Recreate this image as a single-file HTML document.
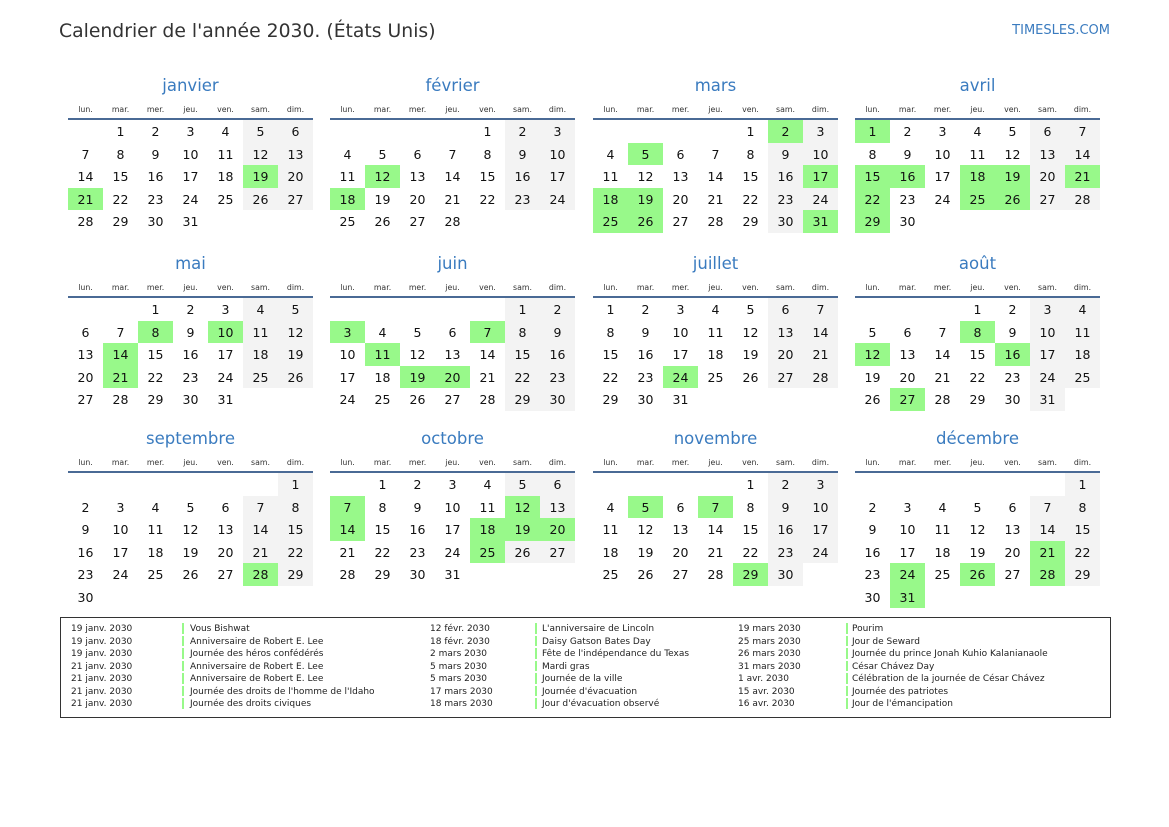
<!DOCTYPE html>
<html><head><meta charset="utf-8">
<style>
*{margin:0;padding:0;box-sizing:border-box}
body{width:1169px;height:827px;background:#fff;font-family:"DejaVu Sans","Liberation Sans",sans-serif;color:#111;position:relative;overflow:hidden}
.t{position:absolute;left:59px;top:21px;font-size:18.8px;color:#333;white-space:nowrap}
.s{position:absolute;right:59px;top:23px;font-size:13px;color:#3a7bbf}
.m{position:absolute;width:245px}
.m h2{height:24px;line-height:26px;text-align:center;font-weight:normal;font-size:16.5px;color:#3a7bbf}
.wd{display:grid;grid-template-columns:repeat(7,35px);height:23px;line-height:26px;font-size:7.8px;color:#333;text-align:center;border-bottom:2px solid #4a6a95}
.d{display:grid;grid-template-columns:repeat(7,35px);grid-auto-rows:22.5px}
.d b,.d i{font-weight:normal;font-style:normal;font-size:12.5px;text-align:center;line-height:23px}
.d b:nth-child(7n+6),.d b:nth-child(7n){background:#f3f3f3}
.d b.g{background:#98f98a}
.lg{position:absolute;left:60px;top:617px;width:1051px;height:101px;border:1.5px solid #333}
.c{position:absolute;top:5px;font-size:9px;line-height:12.5px;color:#222;white-space:nowrap}
.bar{position:absolute;top:5px;width:2px}
.bar div{height:10.5px;margin-bottom:2px;background:#98f98a}
</style></head><body>
<div class="t">Calendrier de l'année 2030. (États Unis)</div>
<div class="s">TIMESLES.COM</div>

<div class="m" style="left:68px;top:73px"><h2>janvier</h2><div class="wd"><span>lun.</span><span>mar.</span><span>mer.</span><span>jeu.</span><span>ven.</span><span>sam.</span><span>dim.</span></div><div class="d"><i></i><b>1</b><b>2</b><b>3</b><b>4</b><b>5</b><b>6</b><b>7</b><b>8</b><b>9</b><b>10</b><b>11</b><b>12</b><b>13</b><b>14</b><b>15</b><b>16</b><b>17</b><b>18</b><b class="g">19</b><b>20</b><b class="g">21</b><b>22</b><b>23</b><b>24</b><b>25</b><b>26</b><b>27</b><b>28</b><b>29</b><b>30</b><b>31</b></div></div>

<div class="m" style="left:330px;top:73px"><h2>février</h2><div class="wd"><span>lun.</span><span>mar.</span><span>mer.</span><span>jeu.</span><span>ven.</span><span>sam.</span><span>dim.</span></div><div class="d"><i></i><i></i><i></i><i></i><b>1</b><b>2</b><b>3</b><b>4</b><b>5</b><b>6</b><b>7</b><b>8</b><b>9</b><b>10</b><b>11</b><b class="g">12</b><b>13</b><b>14</b><b>15</b><b>16</b><b>17</b><b class="g">18</b><b>19</b><b>20</b><b>21</b><b>22</b><b>23</b><b>24</b><b>25</b><b>26</b><b>27</b><b>28</b></div></div>

<div class="m" style="left:593px;top:73px"><h2>mars</h2><div class="wd"><span>lun.</span><span>mar.</span><span>mer.</span><span>jeu.</span><span>ven.</span><span>sam.</span><span>dim.</span></div><div class="d"><i></i><i></i><i></i><i></i><b>1</b><b class="g">2</b><b>3</b><b>4</b><b class="g">5</b><b>6</b><b>7</b><b>8</b><b>9</b><b>10</b><b>11</b><b>12</b><b>13</b><b>14</b><b>15</b><b>16</b><b class="g">17</b><b class="g">18</b><b class="g">19</b><b>20</b><b>21</b><b>22</b><b>23</b><b>24</b><b class="g">25</b><b class="g">26</b><b>27</b><b>28</b><b>29</b><b>30</b><b class="g">31</b></div></div>

<div class="m" style="left:855px;top:73px"><h2>avril</h2><div class="wd"><span>lun.</span><span>mar.</span><span>mer.</span><span>jeu.</span><span>ven.</span><span>sam.</span><span>dim.</span></div><div class="d"><b class="g">1</b><b>2</b><b>3</b><b>4</b><b>5</b><b>6</b><b>7</b><b>8</b><b>9</b><b>10</b><b>11</b><b>12</b><b>13</b><b>14</b><b class="g">15</b><b class="g">16</b><b>17</b><b class="g">18</b><b class="g">19</b><b>20</b><b class="g">21</b><b class="g">22</b><b>23</b><b>24</b><b class="g">25</b><b class="g">26</b><b>27</b><b>28</b><b class="g">29</b><b>30</b></div></div>

<div class="m" style="left:68px;top:251px"><h2>mai</h2><div class="wd"><span>lun.</span><span>mar.</span><span>mer.</span><span>jeu.</span><span>ven.</span><span>sam.</span><span>dim.</span></div><div class="d"><i></i><i></i><b>1</b><b>2</b><b>3</b><b>4</b><b>5</b><b>6</b><b>7</b><b class="g">8</b><b>9</b><b class="g">10</b><b>11</b><b>12</b><b>13</b><b class="g">14</b><b>15</b><b>16</b><b>17</b><b>18</b><b>19</b><b>20</b><b class="g">21</b><b>22</b><b>23</b><b>24</b><b>25</b><b>26</b><b>27</b><b>28</b><b>29</b><b>30</b><b>31</b></div></div>

<div class="m" style="left:330px;top:251px"><h2>juin</h2><div class="wd"><span>lun.</span><span>mar.</span><span>mer.</span><span>jeu.</span><span>ven.</span><span>sam.</span><span>dim.</span></div><div class="d"><i></i><i></i><i></i><i></i><i></i><b>1</b><b>2</b><b class="g">3</b><b>4</b><b>5</b><b>6</b><b class="g">7</b><b>8</b><b>9</b><b>10</b><b class="g">11</b><b>12</b><b>13</b><b>14</b><b>15</b><b>16</b><b>17</b><b>18</b><b class="g">19</b><b class="g">20</b><b>21</b><b>22</b><b>23</b><b>24</b><b>25</b><b>26</b><b>27</b><b>28</b><b>29</b><b>30</b></div></div>

<div class="m" style="left:593px;top:251px"><h2>juillet</h2><div class="wd"><span>lun.</span><span>mar.</span><span>mer.</span><span>jeu.</span><span>ven.</span><span>sam.</span><span>dim.</span></div><div class="d"><b>1</b><b>2</b><b>3</b><b>4</b><b>5</b><b>6</b><b>7</b><b>8</b><b>9</b><b>10</b><b>11</b><b>12</b><b>13</b><b>14</b><b>15</b><b>16</b><b>17</b><b>18</b><b>19</b><b>20</b><b>21</b><b>22</b><b>23</b><b class="g">24</b><b>25</b><b>26</b><b>27</b><b>28</b><b>29</b><b>30</b><b>31</b></div></div>

<div class="m" style="left:855px;top:251px"><h2>août</h2><div class="wd"><span>lun.</span><span>mar.</span><span>mer.</span><span>jeu.</span><span>ven.</span><span>sam.</span><span>dim.</span></div><div class="d"><i></i><i></i><i></i><b>1</b><b>2</b><b>3</b><b>4</b><b>5</b><b>6</b><b>7</b><b class="g">8</b><b>9</b><b>10</b><b>11</b><b class="g">12</b><b>13</b><b>14</b><b>15</b><b class="g">16</b><b>17</b><b>18</b><b>19</b><b>20</b><b>21</b><b>22</b><b>23</b><b>24</b><b>25</b><b>26</b><b class="g">27</b><b>28</b><b>29</b><b>30</b><b>31</b></div></div>

<div class="m" style="left:68px;top:426px"><h2>septembre</h2><div class="wd"><span>lun.</span><span>mar.</span><span>mer.</span><span>jeu.</span><span>ven.</span><span>sam.</span><span>dim.</span></div><div class="d"><i></i><i></i><i></i><i></i><i></i><i></i><b>1</b><b>2</b><b>3</b><b>4</b><b>5</b><b>6</b><b>7</b><b>8</b><b>9</b><b>10</b><b>11</b><b>12</b><b>13</b><b>14</b><b>15</b><b>16</b><b>17</b><b>18</b><b>19</b><b>20</b><b>21</b><b>22</b><b>23</b><b>24</b><b>25</b><b>26</b><b>27</b><b class="g">28</b><b>29</b><b>30</b></div></div>

<div class="m" style="left:330px;top:426px"><h2>octobre</h2><div class="wd"><span>lun.</span><span>mar.</span><span>mer.</span><span>jeu.</span><span>ven.</span><span>sam.</span><span>dim.</span></div><div class="d"><i></i><b>1</b><b>2</b><b>3</b><b>4</b><b>5</b><b>6</b><b class="g">7</b><b>8</b><b>9</b><b>10</b><b>11</b><b class="g">12</b><b>13</b><b class="g">14</b><b>15</b><b>16</b><b>17</b><b class="g">18</b><b class="g">19</b><b class="g">20</b><b>21</b><b>22</b><b>23</b><b>24</b><b class="g">25</b><b>26</b><b>27</b><b>28</b><b>29</b><b>30</b><b>31</b></div></div>

<div class="m" style="left:593px;top:426px"><h2>novembre</h2><div class="wd"><span>lun.</span><span>mar.</span><span>mer.</span><span>jeu.</span><span>ven.</span><span>sam.</span><span>dim.</span></div><div class="d"><i></i><i></i><i></i><i></i><b>1</b><b>2</b><b>3</b><b>4</b><b class="g">5</b><b>6</b><b class="g">7</b><b>8</b><b>9</b><b>10</b><b>11</b><b>12</b><b>13</b><b>14</b><b>15</b><b>16</b><b>17</b><b>18</b><b>19</b><b>20</b><b>21</b><b>22</b><b>23</b><b>24</b><b>25</b><b>26</b><b>27</b><b>28</b><b class="g">29</b><b>30</b></div></div>

<div class="m" style="left:855px;top:426px"><h2>décembre</h2><div class="wd"><span>lun.</span><span>mar.</span><span>mer.</span><span>jeu.</span><span>ven.</span><span>sam.</span><span>dim.</span></div><div class="d"><i></i><i></i><i></i><i></i><i></i><i></i><b>1</b><b>2</b><b>3</b><b>4</b><b>5</b><b>6</b><b>7</b><b>8</b><b>9</b><b>10</b><b>11</b><b>12</b><b>13</b><b>14</b><b>15</b><b>16</b><b>17</b><b>18</b><b>19</b><b>20</b><b class="g">21</b><b>22</b><b>23</b><b class="g">24</b><b>25</b><b class="g">26</b><b>27</b><b class="g">28</b><b>29</b><b>30</b><b class="g">31</b></div></div>

<div class="lg">
<div class="c" style="left:10px">19 janv. 2030<br>19 janv. 2030<br>19 janv. 2030<br>21 janv. 2030<br>21 janv. 2030<br>21 janv. 2030<br>21 janv. 2030</div>
<div class="bar" style="left:121px"><div></div><div></div><div></div><div></div><div></div><div></div><div></div></div>
<div class="c" style="left:129px">Vous Bishwat<br>Anniversaire de Robert E. Lee<br>Journée des héros confédérés<br>Anniversaire de Robert E. Lee<br>Anniversaire de Robert E. Lee<br>Journée des droits de l'homme de l'Idaho<br>Journée des droits civiques</div>
<div class="c" style="left:369px">12 févr. 2030<br>18 févr. 2030<br>2 mars 2030<br>5 mars 2030<br>5 mars 2030<br>17 mars 2030<br>18 mars 2030</div>
<div class="bar" style="left:474px"><div></div><div></div><div></div><div></div><div></div><div></div><div></div></div>
<div class="c" style="left:481px">L'anniversaire de Lincoln<br>Daisy Gatson Bates Day<br>Fête de l'indépendance du Texas<br>Mardi gras<br>Journée de la ville<br>Journée d'évacuation<br>Jour d'évacuation observé</div>
<div class="c" style="left:677px">19 mars 2030<br>25 mars 2030<br>26 mars 2030<br>31 mars 2030<br>1 avr. 2030<br>15 avr. 2030<br>16 avr. 2030</div>
<div class="bar" style="left:785px"><div></div><div></div><div></div><div></div><div></div><div></div><div></div></div>
<div class="c" style="left:791px">Pourim<br>Jour de Seward<br>Journée du prince Jonah Kuhio Kalanianaole<br>César Chávez Day<br>Célébration de la journée de César Chávez<br>Journée des patriotes<br>Jour de l'émancipation</div>
</div>
</body></html>
